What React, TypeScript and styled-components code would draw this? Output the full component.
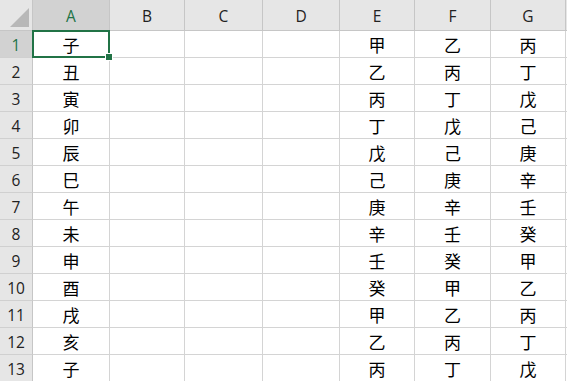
import React from "react";
import styled, { createGlobalStyle } from "styled-components";

const GlobalStyle = createGlobalStyle`
  html, body {
    margin: 0;
    padding: 0;
    background: #fff;
    overflow: hidden;
  }
`;

const COLS = [
  { name: "A", w: 77 },
  { name: "B", w: 75 },
  { name: "C", w: 78 },
  { name: "D", w: 77 },
  { name: "E", w: 75 },
  { name: "F", w: 76 },
  { name: "G", w: 75 },
];

const branches = "子丑寅卯辰巳午未申酉戌亥子".split("");
const stems = "甲乙丙丁戊己庚辛壬癸".split("");

const rows = branches.map((b, i) => ({
  a: b,
  e: stems[i % 10],
  f: stems[(i + 1) % 10],
  g: stems[(i + 2) % 10],
}));

const Sheet = styled.div`
  display: grid;
  grid-template-columns: 33px ${COLS.map((c) => c.w + "px").join(" ")} 1fr;
  grid-template-rows: 31px repeat(13, 27px);
  width: 567px;
  height: 381px;
  overflow: hidden;
`;

const Corner = styled.div`
  position: relative;
  background: #e6e6e6;
  border-right: 1px solid #c6c6c6;
  border-bottom: 1px solid #c6c6c6;
  &::after {
    content: "";
    position: absolute;
    right: 3px;
    bottom: 3px;
    width: 0;
    height: 0;
    border-left: 19px solid transparent;
    border-bottom: 19px solid #b8b8b8;
  }
`;

const ColHead = styled.div<{ $active?: boolean }>`
  display: flex;
  align-items: center;
  justify-content: center;
  padding-top: 2px;
  background: ${(p) => (p.$active ? "#d2d2d2" : "#e6e6e6")};
  color: ${(p) => (p.$active ? "#217346" : "#222")};
  border-right: 1px solid #c6c6c6;
  border-bottom: 1px solid #c6c6c6;
  font-family: "Open Sans", "Liberation Sans", sans-serif;
  font-size: 15.5px;
  box-sizing: border-box;
`;

const RowHead = styled.div<{ $active?: boolean }>`
  display: flex;
  align-items: center;
  justify-content: center;
  padding-top: 1px;
  background: ${(p) => (p.$active ? "#d2d2d2" : "#e6e6e6")};
  color: ${(p) => (p.$active ? "#217346" : "#222")};
  border-right: 1px solid #c6c6c6;
  border-bottom: 1px solid #d0d0d0;
  font-family: "Open Sans", "Liberation Sans", sans-serif;
  font-size: 15.5px;
  box-sizing: border-box;
`;

const Cell = styled.div<{ $selected?: boolean }>`
  position: relative;
  display: flex;
  align-items: center;
  justify-content: center;
  border-right: 1px solid #d4d4d4;
  border-bottom: 1px solid #d4d4d4;
  font-family: "Noto Sans CJK SC", "Noto Sans CJK JP", sans-serif;
  font-size: 17px;
  color: #000;
  box-sizing: border-box;
  ${(p) =>
    p.$selected &&
    `
    &::before {
      content: "";
      position: absolute;
      left: -1px;
      top: -1px;
      right: -1px;
      bottom: -1px;
      border: 2px solid #217346;
      z-index: 2;
    }
    &::after {
      content: "";
      position: absolute;
      right: -4px;
      bottom: -4px;
      width: 6px;
      height: 6px;
      background: #217346;
      border: 1px solid #fff;
      z-index: 3;
    }
  `}
`;

const Filler = styled.div<{ $head?: boolean }>`
  background: ${(p) => (p.$head ? "#e6e6e6" : "#fff")};
  border-bottom: 1px solid ${(p) => (p.$head ? "#c6c6c6" : "#d4d4d4")};
`;

export default function App() {
  return (
    <>
      <GlobalStyle />
      <Sheet>
        <Corner />
        {COLS.map((c) => (
          <ColHead key={c.name} $active={c.name === "A"}>
            {c.name}
          </ColHead>
        ))}
        <Filler $head />
        {rows.map((r, i) => (
          <React.Fragment key={i}>
            <RowHead $active={i === 0}>{i + 1}</RowHead>
            <Cell $selected={i === 0}>{r.a}</Cell>
            <Cell />
            <Cell />
            <Cell />
            <Cell>{r.e}</Cell>
            <Cell>{r.f}</Cell>
            <Cell>{r.g}</Cell>
            <Filler />
          </React.Fragment>
        ))}
      </Sheet>
    </>
  );
}
